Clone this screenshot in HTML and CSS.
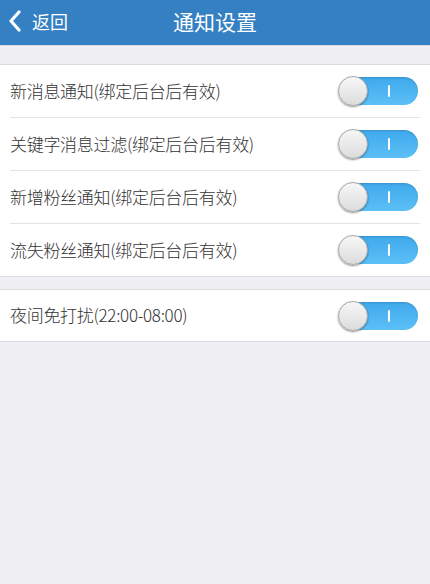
FILE: index.html
```html
<!DOCTYPE html>
<html lang="zh-CN">
<head>
    <meta charset="UTF-8">
    <meta name="viewport" content="width=device-width, initial-scale=1.0">
    <title>通知设置</title>
    <link rel="stylesheet" href="styles.css">
</head>
<body>
    <div class="header">
        <a class="back" href="#">
            <svg class="back-icon" width="14" height="22" viewBox="0 0 14 22">
                <path d="M11 2 L3 11 L11 20" fill="none" stroke="#fff" stroke-width="3.2" stroke-linecap="round" stroke-linejoin="round"/>
            </svg>
            <span>返回</span>
        </a>
        <h1 class="title">通知设置</h1>
    </div>

    <div class="group">
        <div class="row">
            <span class="label">新消息通知(绑定后台后有效)</span>
            <div class="switch"><span class="knob"></span><span class="mark"></span></div>
        </div>
        <div class="row">
            <span class="label">关键字消息过滤(绑定后台后有效)</span>
            <div class="switch"><span class="knob"></span><span class="mark"></span></div>
        </div>
        <div class="row">
            <span class="label">新增粉丝通知(绑定后台后有效)</span>
            <div class="switch"><span class="knob"></span><span class="mark"></span></div>
        </div>
        <div class="row">
            <span class="label">流失粉丝通知(绑定后台后有效)</span>
            <div class="switch"><span class="knob"></span><span class="mark"></span></div>
        </div>
    </div>

    <div class="group night">
        <div class="row">
            <span class="label">夜间免打扰(22:00-08:00)</span>
            <div class="switch"><span class="knob"></span><span class="mark"></span></div>
        </div>
    </div>
</body>
</html>
```

FILE: styles.css
```css
body {
    margin: 0;
    background-color: #efeff4;
    font-family: "Noto Sans CJK SC", "Liberation Sans", sans-serif;
    color: #333;
}
.header {
    height: 46px;
    background-color: #3480c2;
    display: flex;
    align-items: center;
    justify-content: center;
    position: relative;
    border-bottom: 1px solid #d8d8dc;
    box-sizing: border-box;
}
.back {
    position: absolute;
    left: 8px;
    top: 0;
    height: 100%;
    display: flex;
    align-items: center;
    gap: 10px;
    color: #fff;
    text-decoration: none;
    font-size: 18px;
}
.back-icon {
    margin-top: -4px;
}
.back span {
    margin-top: -4px;
}
.title {
    margin: -4px 0 0;
    font-size: 21px;
    font-weight: normal;
    color: #fff;
}
.group {
    background-color: #fff;
    border-top: 1px solid #dcdce0;
    border-bottom: 1px solid #dcdce0;
    margin-top: 18px;
    padding: 0 10px;
}
.group.night {
    margin-top: 12px;
}
.row {
    height: 52px;
    display: flex;
    align-items: center;
    justify-content: space-between;
    border-bottom: 1px solid #e4e4e6;
}
.row:last-child {
    border-bottom: none;
}
.group.night .row {
    height: 51px;
}
.label {
    font-size: 17px;
    font-weight: 300;
    letter-spacing: -0.3px;
    color: #333;
    margin-top: -2px;
}
.switch {
    width: 79px;
    height: 28px;
    border-radius: 14px;
    background: linear-gradient(#3fa9ec, #5cc0f7);
    position: relative;
    margin-right: 2px;
    box-shadow: inset 0 1px 2px rgba(0, 0, 0, 0.15);
}
.knob {
    position: absolute;
    left: -1px;
    top: -1px;
    width: 30px;
    height: 30px;
    border-radius: 50%;
    background: linear-gradient(#f7f7f7, #dcdcdc);
    box-shadow: 0 1px 2px rgba(0, 0, 0, 0.45);
    box-sizing: border-box;
    border: 1px solid #a9a9a9;
}
.mark {
    position: absolute;
    left: 49px;
    top: 8px;
    width: 2px;
    height: 12px;
    background-color: #fff;
    border-radius: 1px;
}
```
